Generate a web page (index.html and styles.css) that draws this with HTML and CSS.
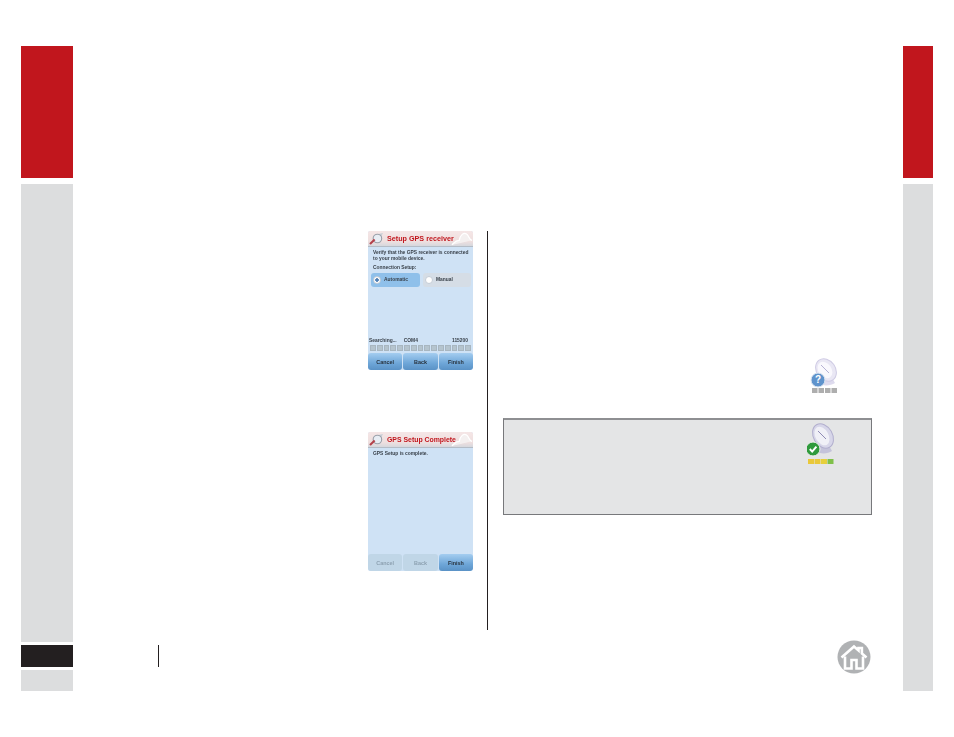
FILE: index.html
```html
<!DOCTYPE html>
<html lang="en">
<head>
<meta charset="utf-8">
<title>GPS Setup</title>
<link rel="stylesheet" href="styles.css">
</head>
<body>
<div class="page">
  <aside class="rail rail-left">
    <div class="rail-red"></div>
    <div class="rail-gray"></div>
    <div class="rail-dark"></div>
    <div class="rail-end"></div>
  </aside>

  <main class="main">
    <div class="columns">
      <section class="col-left">
        <div class="screen">
          <div class="titlebar">
            <svg class="title-icon" viewBox="0 0 16 14"><path d="M11 2 15 1 13 5z" fill="#c9ced6"/><circle cx="9" cy="7" r="4.6" fill="#e8edf4" stroke="#9aa0aa" stroke-width="1.2"/><path d="M1 13 6 8" stroke="#b3404a" stroke-width="2.2"/></svg>
            <span class="title-text">Setup GPS receiver</span>
            <svg class="title-cog" viewBox="0 0 24 16"><path d="M1 15C4 12 5 10 9 10 10 4 14 1 17 3 20 5 19 9 23 10" fill="#f4f0f0" stroke="#fff" stroke-width="1.4"/></svg>
          </div>
          <div class="screen-body">
            <p class="s-text">Verify that the GPS receiver is connected<br>to your mobile device.</p>
            <p class="s-text s-label">Connection Setup:</p>
            <div class="choices">
              <div class="choice choice-on"><span class="radio radio-on"></span>Automatic</div>
              <div class="choice choice-off"><span class="radio"></span>Manual</div>
            </div>
            <div class="status"><span>Searching...</span><span class="status-com">COM4</span><span>115200</span></div>
            <div class="progress">
              <i></i><i></i><i></i><i></i><i></i><i></i><i></i><i></i><i></i><i></i><i></i><i></i><i></i><i></i><i></i>
            </div>
          </div>
          <div class="buttons">
            <div class="btn">Cancel</div>
            <div class="btn">Back</div>
            <div class="btn">Finish</div>
          </div>
        </div>

        <div class="screen screen-second">
          <div class="titlebar">
            <svg class="title-icon" viewBox="0 0 16 14"><path d="M11 2 15 1 13 5z" fill="#c9ced6"/><circle cx="9" cy="7" r="4.6" fill="#e8edf4" stroke="#9aa0aa" stroke-width="1.2"/><path d="M1 13 6 8" stroke="#b3404a" stroke-width="2.2"/></svg>
            <span class="title-text title-text-tight">GPS Setup Complete</span>
            <svg class="title-cog" viewBox="0 0 24 16"><path d="M1 15C4 12 5 10 9 10 10 4 14 1 17 3 20 5 19 9 23 10" fill="#f4f0f0" stroke="#fff" stroke-width="1.4"/></svg>
          </div>
          <div class="screen-body">
            <p class="s-text">GPS Setup is complete.</p>
          </div>
          <div class="buttons">
            <div class="btn btn-off">Cancel</div>
            <div class="btn btn-off">Back</div>
            <div class="btn">Finish</div>
          </div>
        </div>
      </section>

      <section class="col-right">
        <div class="icon-row">
          <svg class="dish" viewBox="0 0 28 42">
            <path d="M13 16 9 26c4 2 12 2 16-1l-5-9z" fill="#dedbee"/>
            <ellipse cx="16" cy="12" rx="9.5" ry="12" transform="rotate(-35 16 12)" fill="#e9e7f4" stroke="#cfcbe4"/>
            <ellipse cx="15" cy="12" rx="6.5" ry="9" transform="rotate(-35 15 12)" fill="#f9f8fd"/>
            <path d="M11 7 19 15" stroke="#b6b2d4"/>
            <circle cx="8" cy="22" r="7" fill="#5f93cc" stroke="#e2e9f2"/>
            <text class="dish-mark" x="8" y="25.4" text-anchor="middle">?</text>
            <g fill="#aeaeae"><rect x="2" y="30" width="5.5" height="5"/><rect x="8.5" y="30" width="5.5" height="5"/><rect x="15" y="30" width="5.5" height="5"/><rect x="21.5" y="30" width="5.5" height="5"/></g>
          </svg>
        </div>
        <div class="callout">
          <svg class="dish" viewBox="0 0 28 42">
            <path d="M12 20 10 30c4 2 11 2 15-1l-5-9z" fill="#c4c3da"/>
            <ellipse cx="16" cy="14" rx="9.5" ry="13" transform="rotate(-30 16 14)" fill="#d7d6e9" stroke="#b2afce"/>
            <ellipse cx="15" cy="14" rx="6.5" ry="10" transform="rotate(-30 15 14)" fill="#f0f0f7"/>
            <path d="M11 9 19 17" stroke="#8f8bb5"/>
            <circle cx="6" cy="27" r="7" fill="#2f9a3c" stroke="#eef0ee"/>
            <path d="M2.8 27 5.2 29.6 9.4 24.6" fill="none" stroke="#fff" stroke-width="2"/>
            <rect x="1" y="37" width="6" height="5" fill="#e9c83a"/><rect x="7.5" y="37" width="6" height="5" fill="#e9c83a"/><rect x="14" y="37" width="6" height="5" fill="#e6cf3c"/><rect x="20.5" y="37" width="6" height="5" fill="#7fc04a"/>
          </svg>
        </div>
      </section>
    </div>

    <footer class="footer">
      <div class="footer-rule"></div>
      <svg class="home" viewBox="0 0 34 34">
        <circle cx="17" cy="17" r="16.5" fill="#b0b2b4"/>
        <path d="M4.5 17.5 17 6.5 21.5 10.4V8h3.4v5.4l4.6 4.1" fill="none" stroke="#fff" stroke-width="2.6"/>
        <path d="M8 16.5v12h6.5V20h5v8.5H26v-12" fill="none" stroke="#fff" stroke-width="2.6"/>
      </svg>
    </footer>
  </main>

  <aside class="rail rail-right">
    <div class="rail-red"></div>
    <div class="rail-gray rail-gray-full"></div>
  </aside>
</div>
</body>
</html>
```

FILE: styles.css
```css
* { box-sizing: border-box; }
html, body { margin: 0; padding: 0; background: #fff; }
body { font-family: "Liberation Sans", Arial, sans-serif; }

.page {
  display: flex;
  width: 954px;
  height: 737px;
  padding: 46px 21px 46px 21px;
}

.rail { display: flex; flex-direction: column; flex: none; height: 645px; }
.rail-left { width: 52px; }
.rail-right { width: 30px; }
.rail-red { height: 132px; background: #c1161d; flex: none; }
.rail-gray { height: 458px; margin-top: 6px; background: #dcddde; flex: none; }
.rail-gray-full { height: 507px; }
.rail-dark { height: 22px; margin-top: 3px; background: #231f20; flex: none; }
.rail-end { height: 21px; margin-top: 3px; background: #dcddde; flex: none; }

.main { flex: 1; display: flex; flex-direction: column; min-width: 0; }

.columns { display: flex; height: 399px; margin-top: 185px; }

.col-left {
  width: 416px;
  border-right: 1px solid #231f20;
  padding: 0 14px 0 295px;
}

.screen {
  width: 105px;
  height: 139px;
  display: flex;
  flex-direction: column;
  background: #cfe2f5;
  border-radius: 2px;
  overflow: hidden;
  filter: blur(0.4px);
}
.screen-second { margin-top: 62px; }

.titlebar {
  height: 16px;
  flex: none;
  display: flex;
  align-items: center;
  padding-left: 1px;
  background: linear-gradient(#f5e6e6, #eedfdf 70%, #d6d8dd);
  border-bottom: 1px solid #b4bcc6;
  position: relative;
}
.title-icon { width: 15px; height: 13px; flex: none; }
.title-text { margin-left: 3px; font-size: 7.2px; font-weight: bold; color: #c1161d; white-space: nowrap; position: relative; z-index: 1; }
.title-text-tight { font-size: 6.9px; }
.title-cog { position: absolute; right: 0; top: 0; width: 22px; height: 15px; }

.screen-body { flex: 1; display: flex; flex-direction: column; padding: 3px 2px 0 5px; min-height: 0; }
.s-text { margin: 0; font-size: 4.9px; line-height: 6.2px; font-weight: bold; color: #39414a; white-space: nowrap; }
.s-label { margin-top: 3px; }

.choices { display: flex; gap: 3px; margin-top: 1px; margin-left: -2px; }
.choice {
  width: 49px;
  height: 14px;
  border-radius: 3px;
  display: flex;
  align-items: center;
  font-size: 4.9px;
  font-weight: bold;
  color: #39414a;
  padding-left: 2px;
}
.choice-on { background: #8fc0ea; }
.choice-off { background: #d5dde6; width: 48px; }
.radio {
  width: 8px;
  height: 8px;
  border-radius: 50%;
  background: #fff;
  flex: none;
  margin-right: 3px;
  border: 1px solid #c4ccd6;
}
.radio-on { background: radial-gradient(circle, #4d7fb5 0 1.5px, #fff 2px); }

.status {
  display: flex;
  margin-top: auto;
  font-size: 4.9px;
  font-weight: bold;
  color: #39414a;
  line-height: 6px;
  margin-left: -4px;
  padding-right: 3px;
}
.status-com { margin-left: 7px; margin-right: auto; }

.progress { display: flex; gap: 1px; height: 6px; margin: 1px 0 2px -3px; }
.progress i { flex: 1; background: #b5c4ce; border: 1px solid #a8b6c0; }

.buttons { display: flex; gap: 1px; height: 17px; flex: none; }
.btn {
  flex: 1;
  display: flex;
  align-items: center;
  justify-content: center;
  font-size: 5.4px;
  font-weight: bold;
  color: #27313c;
  background: linear-gradient(#a4cdf0, #6ea6d8 60%, #5a92c6);
  border-radius: 3px;
}
.btn-off { background: #c0d6e7; color: #8da1b1; }

.col-right { flex: 1; padding: 0 31px 0 15px; display: flex; flex-direction: column; }
.icon-row { display: flex; justify-content: flex-end; padding: 127px 34px 0 0; height: 187px; }

.dish { width: 28px; height: 42px; display: block; flex: none; }
.dish-mark { font: bold 10px "Liberation Sans", sans-serif; fill: #fff; }

.callout {
  width: 369px;
  height: 97px;
  background: #e4e5e6;
  border: 1px solid #77787b;
  border-top-width: 2px;
  border-top-color: #8e8f92;
  display: flex;
  justify-content: flex-end;
  padding: 2px 36px 0 0;
}

.footer {
  display: flex;
  justify-content: space-between;
  align-items: flex-start;
  margin-top: 10px;
  padding: 5px 32px 0 85px;
}
.footer-rule { width: 1px; height: 22px; background: #231f20; }
.home { width: 34px; height: 34px; display: block; margin-top: -5px; }
```
